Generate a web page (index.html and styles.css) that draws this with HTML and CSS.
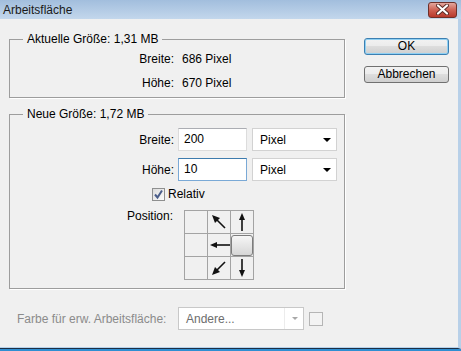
FILE: index.html
```html
<!DOCTYPE html>
<html lang="de">
<head>
    <meta charset="UTF-8">
    <title>Arbeitsfläche</title>
    <link rel="stylesheet" href="styles.css">
</head>
<body>
    <div class="window">
        <div class="titlebar">
            <span class="title">Arbeitsfläche</span>
            <div class="close-btn">
                <svg width="13" height="11" viewBox="0 0 13 11">
                    <path d="M2 1.5 L11 9.5 M11 1.5 L2 9.5" stroke="#5a2a25" stroke-width="4" stroke-linecap="round"/>
                    <path d="M2 1.5 L11 9.5 M11 1.5 L2 9.5" stroke="#fff" stroke-width="2.2" stroke-linecap="round"/>
                </svg>
            </div>
        </div>
        <div class="client">
            <div class="main">
                <fieldset class="group group-current">
                    <legend>Aktuelle Größe: 1,31 MB</legend>
                    <div class="info-row">
                        <span class="lbl">Breite:</span>
                        <span>686 Pixel</span>
                    </div>
                    <div class="info-row">
                        <span class="lbl">Höhe:</span>
                        <span>670 Pixel</span>
                    </div>
                </fieldset>

                <fieldset class="group group-new">
                    <legend>Neue Größe: 1,72 MB</legend>
                    <div class="field-row">
                        <span class="lbl">Breite:</span>
                        <div class="textbox">200</div>
                        <div class="dropdown">
                            <span>Pixel</span>
                            <span class="caret"></span>
                        </div>
                    </div>
                    <div class="field-row second">
                        <span class="lbl">Höhe:</span>
                        <div class="textbox focused">10</div>
                        <div class="dropdown">
                            <span>Pixel</span>
                            <span class="caret"></span>
                        </div>
                    </div>
                    <div class="check-row">
                        <span class="checkbox">
                            <svg width="11" height="11" viewBox="0 0 11 11">
                                <path d="M2 5.5 L4.5 8.5 L9 1.5" fill="none" stroke="#4a5d8a" stroke-width="2"/>
                            </svg>
                        </span>
                        <span>Relativ</span>
                    </div>
                    <div class="position-row">
                        <span class="lbl">Position:</span>
                        <div class="anchor-grid">
                            <div class="cell"></div>
                            <div class="cell">
                                <svg width="22" height="22" viewBox="0 0 22 22">
                                    <line x1="17" y1="17" x2="8" y2="8" stroke="#111" stroke-width="1.6"/>
                                    <polygon points="4,4 12,7 7,12" fill="#111"/>
                                </svg>
                            </div>
                            <div class="cell">
                                <svg width="22" height="22" viewBox="0 0 22 22">
                                    <line x1="11" y1="20" x2="11" y2="8" stroke="#111" stroke-width="1.6"/>
                                    <polygon points="11,2 8,9 14,9" fill="#111"/>
                                </svg>
                            </div>
                            <div class="cell"></div>
                            <div class="cell">
                                <svg width="22" height="22" viewBox="0 0 22 22">
                                    <line x1="22" y1="11" x2="8" y2="11" stroke="#111" stroke-width="1.6"/>
                                    <polygon points="2,11 9,8 9,14" fill="#111"/>
                                </svg>
                            </div>
                            <div class="cell anchor"><span class="anchor-box"></span></div>
                            <div class="cell"></div>
                            <div class="cell">
                                <svg width="22" height="22" viewBox="0 0 22 22">
                                    <line x1="17" y1="5" x2="8" y2="14" stroke="#111" stroke-width="1.6"/>
                                    <polygon points="4,18 7,10 12,15" fill="#111"/>
                                </svg>
                            </div>
                            <div class="cell">
                                <svg width="22" height="22" viewBox="0 0 22 22">
                                    <line x1="11" y1="2" x2="11" y2="14" stroke="#111" stroke-width="1.6"/>
                                    <polygon points="11,20 8,13 14,13" fill="#111"/>
                                </svg>
                            </div>
                        </div>
                    </div>
                </fieldset>

                <div class="backdrop-row">
                    <span class="muted">Farbe für erw. Arbeitsfläche:</span>
                    <div class="dropdown disabled">
                        <span>Andere...</span>
                        <span class="sep"></span>
                        <span class="caret"></span>
                    </div>
                    <span class="swatch"></span>
                </div>
            </div>

            <div class="actions">
                <button class="btn default">OK</button>
                <button class="btn">Abbrechen</button>
            </div>
        </div>
    </div>
</body>
</html>
```

FILE: styles.css
```css
* {
    box-sizing: border-box;
}
body {
    margin: 0;
    font-family: "Liberation Sans", Arial, sans-serif;
    font-size: 12px;
    color: #000;
    background-color: #f0f0f0;
}
.window {
    width: 461px;
    height: 351px;
    display: flex;
    flex-direction: column;
    border-bottom: 2px solid #2f8fd2;
}
.titlebar {
    height: 19px;
    display: flex;
    align-items: center;
    justify-content: space-between;
    padding: 0 4px 0 3px;
    background: linear-gradient(#a2bedd, #c3d7ec);
}
.title {
    color: #1a1a1a;
}
.close-btn {
    width: 29px;
    height: 16px;
    border: 1px solid #6e3029;
    border-radius: 3px;
    background: linear-gradient(#e3a79d, #cf6153 50%, #b8392c);
    display: flex;
    align-items: center;
    justify-content: center;
}
.client {
    flex: 1;
    display: flex;
    background-color: #f0f0f0;
    border-right: 3px solid #b8d0e8;
    border-bottom: 1px solid #1d2f44;
    box-shadow: inset 0 -1px 0 #b5d2ec;
}
.main {
    width: 345px;
    padding-left: 9px;
}

/* group boxes */
.group {
    width: 336px;
    margin: 0;
    padding: 0;
    border: 1px solid #9d9d9d;
    box-shadow: 1px 1px 0 #fff;
}
.group legend {
    margin-left: 13px;
    padding: 0 4px;
    line-height: 14px;
}
.group-current {
    margin-top: 13px;
    padding: 5px 0 6px;
}
.group-new {
    margin-top: 9px;
    padding: 7px 0 8px;
}
.lbl {
    text-align: right;
}
.info-row {
    display: flex;
    gap: 8px;
    line-height: 16px;
}
.info-row + .info-row {
    margin-top: 8px;
}
.info-row .lbl {
    width: 164px;
}

.field-row {
    display: flex;
    align-items: center;
    height: 23px;
}
.field-row.second {
    margin-top: 7px;
}
.field-row .lbl {
    width: 164px;
    margin-right: 4px;
}
.textbox {
    width: 69px;
    height: 23px;
    padding-left: 5px;
    line-height: 21px;
    background-color: #fff;
    border: 1px solid #dcdcdc;
    border-top-color: #abadb3;
}
.textbox.focused {
    border-color: #7aa9d6;
    border-top-color: #3d7bad;
}
.dropdown {
    width: 85px;
    height: 23px;
    margin-left: 5px;
    padding: 0 5px 0 7px;
    display: flex;
    align-items: center;
    justify-content: space-between;
    background-color: #fff;
    border: 1px solid #d2d2d2;
}
.caret {
    width: 0;
    height: 0;
    border-left: 4px solid transparent;
    border-right: 4px solid transparent;
    border-top: 4px solid #000;
}

.check-row {
    display: flex;
    align-items: center;
    gap: 3px;
    line-height: 14px;
    margin-top: 6px;
    margin-left: 142px;
}
.checkbox {
    width: 13px;
    height: 13px;
    border: 1px solid #8e8f8f;
    background: linear-gradient(135deg, #dcdcdc, #fbfbfb);
    display: flex;
    align-items: center;
    justify-content: center;
}

.position-row {
    display: flex;
    margin-top: 9px;
}
.position-row .lbl {
    width: 163px;
    margin-right: 11px;
    line-height: 12px;
}
.anchor-grid {
    display: grid;
    grid-template-columns: repeat(3, 22px);
    grid-template-rows: repeat(3, 22px);
    gap: 1px;
    background-color: #a3a3a3;
    border: 1px solid #a3a3a3;
}
.cell {
    background-color: #f0f0f0;
    display: flex;
    align-items: center;
    justify-content: center;
}
.anchor-box {
    width: 22px;
    height: 21px;
    border: 1px solid #7d7d7d;
    border-radius: 3px;
    background: linear-gradient(#f6f6f6, #d6d6d6);
}

/* backdrop colour row */
.backdrop-row {
    display: flex;
    align-items: center;
    height: 23px;
    margin-top: 18px;
    padding-left: 8px;
}
.muted {
    width: 161px;
    color: #8b8b8b;
}
.dropdown.disabled {
    width: 126px;
    margin-left: 0;
    padding: 0 5px 0 7px;
    color: #6d6d6d;
    border-color: #c8c8c8;
}
.dropdown.disabled span:first-child {
    flex: 1;
}
.sep {
    width: 1px;
    height: 21px;
    margin-right: 7px;
    background-color: #ececec;
}
.dropdown.disabled .caret {
    border-top-color: #a8a8a8;
    border-left-width: 3px;
    border-right-width: 3px;
    border-top-width: 3px;
}
.swatch {
    width: 14px;
    height: 14px;
    margin-left: 5px;
    border: 1px solid #b5b5b5;
    background-color: #f3f3f3;
}

/* buttons */
.actions {
    display: flex;
    flex-direction: column;
    gap: 11px;
    margin-left: 19px;
    padding-top: 19px;
}
.btn {
    width: 85px;
    height: 17px;
    padding: 0;
    font-family: inherit;
    font-size: 12px;
    line-height: 15px;
    color: #000;
    border: 1px solid #707070;
    border-radius: 3px;
    background: linear-gradient(#f2f2f2, #ebebeb 50%, #dddddd 50%, #cfcfcf);
}
.btn.default {
    border-color: #3c7fb1;
    box-shadow: inset 0 0 0 1px #8fd0f3;
}
```
